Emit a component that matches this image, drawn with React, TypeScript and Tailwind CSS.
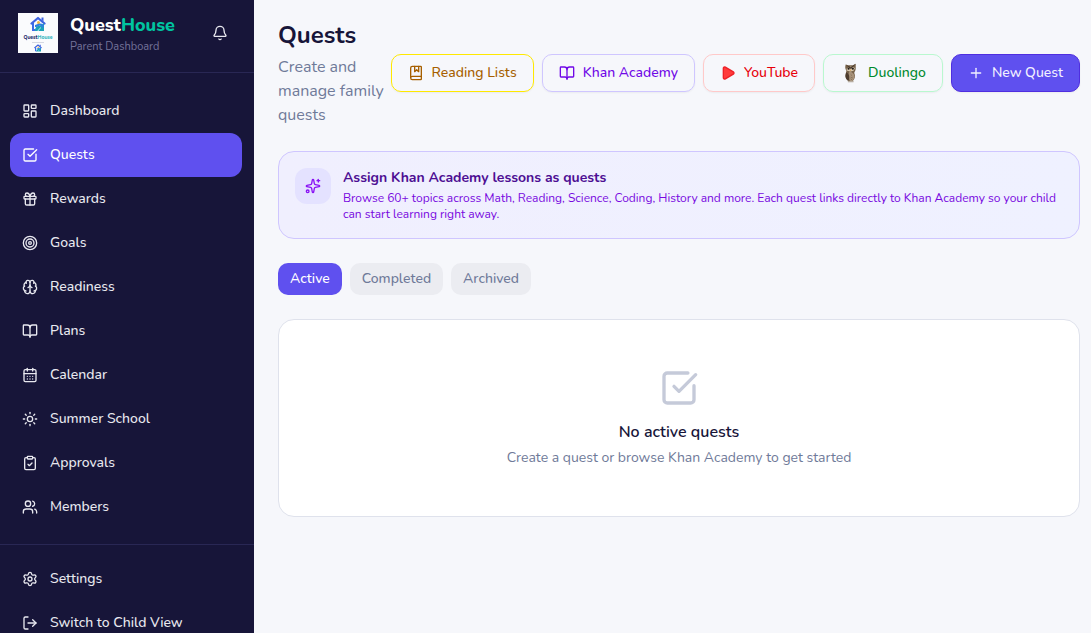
import { useState } from "react"
import {
  Bell,
  BookMarked,
  BookOpen,
  Brain,
  CalendarDays,
  ClipboardCheck,
  Gift,
  LayoutDashboard,
  LogOut,
  Play,
  Plus,
  Settings,
  Sparkles,
  SquareCheckBig,
  Sun,
  Target,
  Users,
} from "lucide-react"

const navItems = [
  { label: "Dashboard", icon: LayoutDashboard },
  { label: "Quests", icon: SquareCheckBig },
  { label: "Rewards", icon: Gift },
  { label: "Goals", icon: Target },
  { label: "Readiness", icon: Brain },
  { label: "Plans", icon: BookOpen },
  { label: "Calendar", icon: CalendarDays },
  { label: "Summer School", icon: Sun },
  { label: "Approvals", icon: ClipboardCheck },
  { label: "Members", icon: Users },
]

const tabs = ["Active", "Completed", "Archived"]

function HouseMark({ className }: { className: string }) {
  return (
    <svg viewBox="0 0 32 32" className={className} aria-hidden="true">
      <path d="M3 15 16 4l13 11" fill="none" stroke="#3f63e0" strokeWidth="4.5" strokeLinejoin="round" strokeLinecap="round" />
      <path d="M23 3h4v8l-4-3z" fill="#3f63e0" />
      <path d="M6 14v14h5" fill="none" stroke="#3b6be6" strokeWidth="4" />
      <circle cx="17" cy="13" r="3" fill="#f5b83d" />
      <path d="M10 30c0-8 5-11 10-11l8-4v15z" fill="#1ba3b8" />
      <path d="M10 20c4 0 6-3 10-3s6 3 6 6" fill="none" stroke="#2f7fe0" strokeWidth="4" />
      <path d="M16 30c0-4 5-3 5-7" fill="none" stroke="#bff0ee" strokeWidth="2" />
    </svg>
  )
}

function Logo() {
  return (
    <div className="flex size-10 shrink-0 flex-col items-center bg-[#fafbfd] pt-[3px]">
      <HouseMark className="size-4" />
      <div className="mt-0.5 text-[5px] font-extrabold leading-[7px] text-[#1d2b6b]">
        Quest<span className="text-[#35b5c0]">House</span>
      </div>
      <div className="mt-px h-px w-3 bg-[#d5d8e2]" />
      <HouseMark className="mt-px size-2" />
    </div>
  )
}

function Owl() {
  return (
    <svg viewBox="0 0 20 28" className="h-5 w-5 shrink-0" aria-hidden="true">
      <path d="M4 2 7 3h7l4-2v7c0 3-2 4-2 6 2 4 1 9-3 12H9c-4-2-6-6-5-11l1-4C3 8 3 5 4 2z" fill="#77624a" />
      <path d="M9 12c5 1 8 4 7 9-1 3-3 5-5 5-3-3-4-9-2-14z" fill="#a8927a" />
      <path d="M5 13c4 2 5 7 3 12-4-2-6-6-3-12z" fill="#4d3c2e" />
      <path d="m5 8 6-3 6 2-2 4-4 1-5-1z" fill="#d8c9b0" />
      <path d="m4 2 7 4 7-5-6 7h-2z" fill="#4b3b2c" />
      <circle cx="8" cy="8" r="1.500" fill="#211a14" />
      <circle cx="14" cy="8" r="1.500" fill="#211a14" />
      <path d="m10 9 2 0-1 3z" fill="#d49d4f" />
      <path d="M11 16l2 2m-2 2 3 1m-3 1 2 2" stroke="#806a50" />
      <path d="M7 26h8" stroke="#b8aea2" strokeWidth="2" />
    </svg>
  )
}

const navClass = "flex h-11 items-center gap-3 rounded-xl px-3 text-sm font-medium"
const actionClass =
  "flex h-[38px] items-center gap-2 whitespace-nowrap rounded-[10px] border px-4 text-sm font-medium shadow-xs"

function Sidebar() {
  return (
    <aside className="flex w-[254px] shrink-0 flex-col overflow-hidden bg-[#171539] text-[#e8e8ef]">
      <div className="flex h-[73px] shrink-0 items-center border-b border-[#292754] px-[18px] pb-1.5">
        <Logo />
        <div className="ml-3 flex-1">
          <div className="text-lg font-extrabold leading-7 text-white">
            Quest<span className="text-[#00c4a0]">House</span>
          </div>
          <p className="text-[11px] leading-4 text-[#74739a]">Parent Dashboard</p>
        </div>
        <button type="button" aria-label="Notifications" className="p-2">
          <Bell size={16} />
        </button>
      </div>
      <nav className="shrink-0 border-b border-[#292754] pb-[15px] pl-2.5 pr-3 pt-4">
        {navItems.map(({ label, icon: Icon }) => (
          <a
            key={label}
            href="#"
            className={`${navClass} ${label === "Quests" ? "bg-[#5f50ef] text-white" : ""}`}
          >
            <Icon size={16} />
            {label}
          </a>
        ))}
      </nav>
      <div className="shrink-0 pb-3 pl-2.5 pr-3 pt-3">
        <a href="#" className={navClass}>
          <Settings size={16} />
          Settings
        </a>
        <a href="#" className={navClass}>
          <LogOut size={16} />
          Switch to Child View
        </a>
      </div>
    </aside>
  )
}

export default function App() {
  const [tab, setTab] = useState("Active")

  return (
    <div className="flex h-screen overflow-hidden bg-[#f6f7fb] font-['Nunito','Open_Sans',sans-serif] text-[#171539]">
      <Sidebar />
      <main className="min-w-0 flex-1 overflow-hidden pl-6 pr-[11px] pt-[19px]">
        <header className="flex items-center justify-between">
          <div>
            <h1 className="text-2xl font-bold">Quests</h1>
            <p className="mt-1 text-base text-[#6f7a99]">Create and manage family quests</p>
          </div>
          <div className="flex shrink-0 gap-2">
            <button type="button" className={`${actionClass} border-[#ffe900] text-[#a65f00]`}>
              <BookMarked size={16} />
              Reading Lists
            </button>
            <button type="button" className={`${actionClass} border-[#cfc6ff] text-[#7008e7]`}>
              <BookOpen size={16} />
              Khan Academy
            </button>
            <button type="button" className={`${actionClass} border-[#ffc9c9] text-[#e7000b]`}>
              <Play size={16} fill="#ff3b3b" className="text-[#ee2027]" />
              YouTube
            </button>
            <button type="button" className={`${actionClass} border-[#b9f8cf] text-[#008a2e]`}>
              <Owl />
              Duolingo
            </button>
            <button type="button" className={`${actionClass} border-[#4f2ee0] bg-[#5f50ef] text-[#f2f0ff]`}>
              <Plus size={16} />
              New Quest
            </button>
          </div>
        </header>

        <section className="mt-6 flex items-start gap-3 rounded-2xl border border-[#cfc6ff] bg-linear-to-r from-[#f0effe] to-[#eff1ff] p-4">
          <div className="flex size-9 shrink-0 items-center justify-center rounded-xl bg-[#e4e2ff] text-[#8a12f5]">
            <Sparkles size={16} />
          </div>
          <div>
            <h2 className="text-sm font-bold text-[#4d0e93]">Assign Khan Academy lessons as quests</h2>
            <p className="mt-0.5 text-xs text-[#7808e0]">
              Browse 60+ topics across Math, Reading, Science, Coding, History and more. Each quest links directly to
              Khan Academy so your child can start learning right away.
            </p>
          </div>
        </section>

        <div className="mt-6 flex gap-2">
          {tabs.map((name) => (
            <button
              key={name}
              type="button"
              onClick={() => setTab(name)}
              className={`h-8 rounded-[10px] px-3 text-sm font-medium ${
                tab === name ? "bg-[#5f50ef] text-white" : "bg-[#ebecf1] text-[#6f7a99]"
              }`}
            >
              {name}
            </button>
          ))}
        </div>

        <section className="mt-6 flex flex-col items-center rounded-2xl border border-[#dfe2ec] bg-white py-12">
          <SquareCheckBig size={40} className="text-[#c5cad9]" />
          <h3 className="mt-3 text-base font-semibold">No active quests</h3>
          <p className="mt-1 text-sm text-[#6f7a99]">Create a quest or browse Khan Academy to get started</p>
        </section>
      </main>
    </div>
  )
}
